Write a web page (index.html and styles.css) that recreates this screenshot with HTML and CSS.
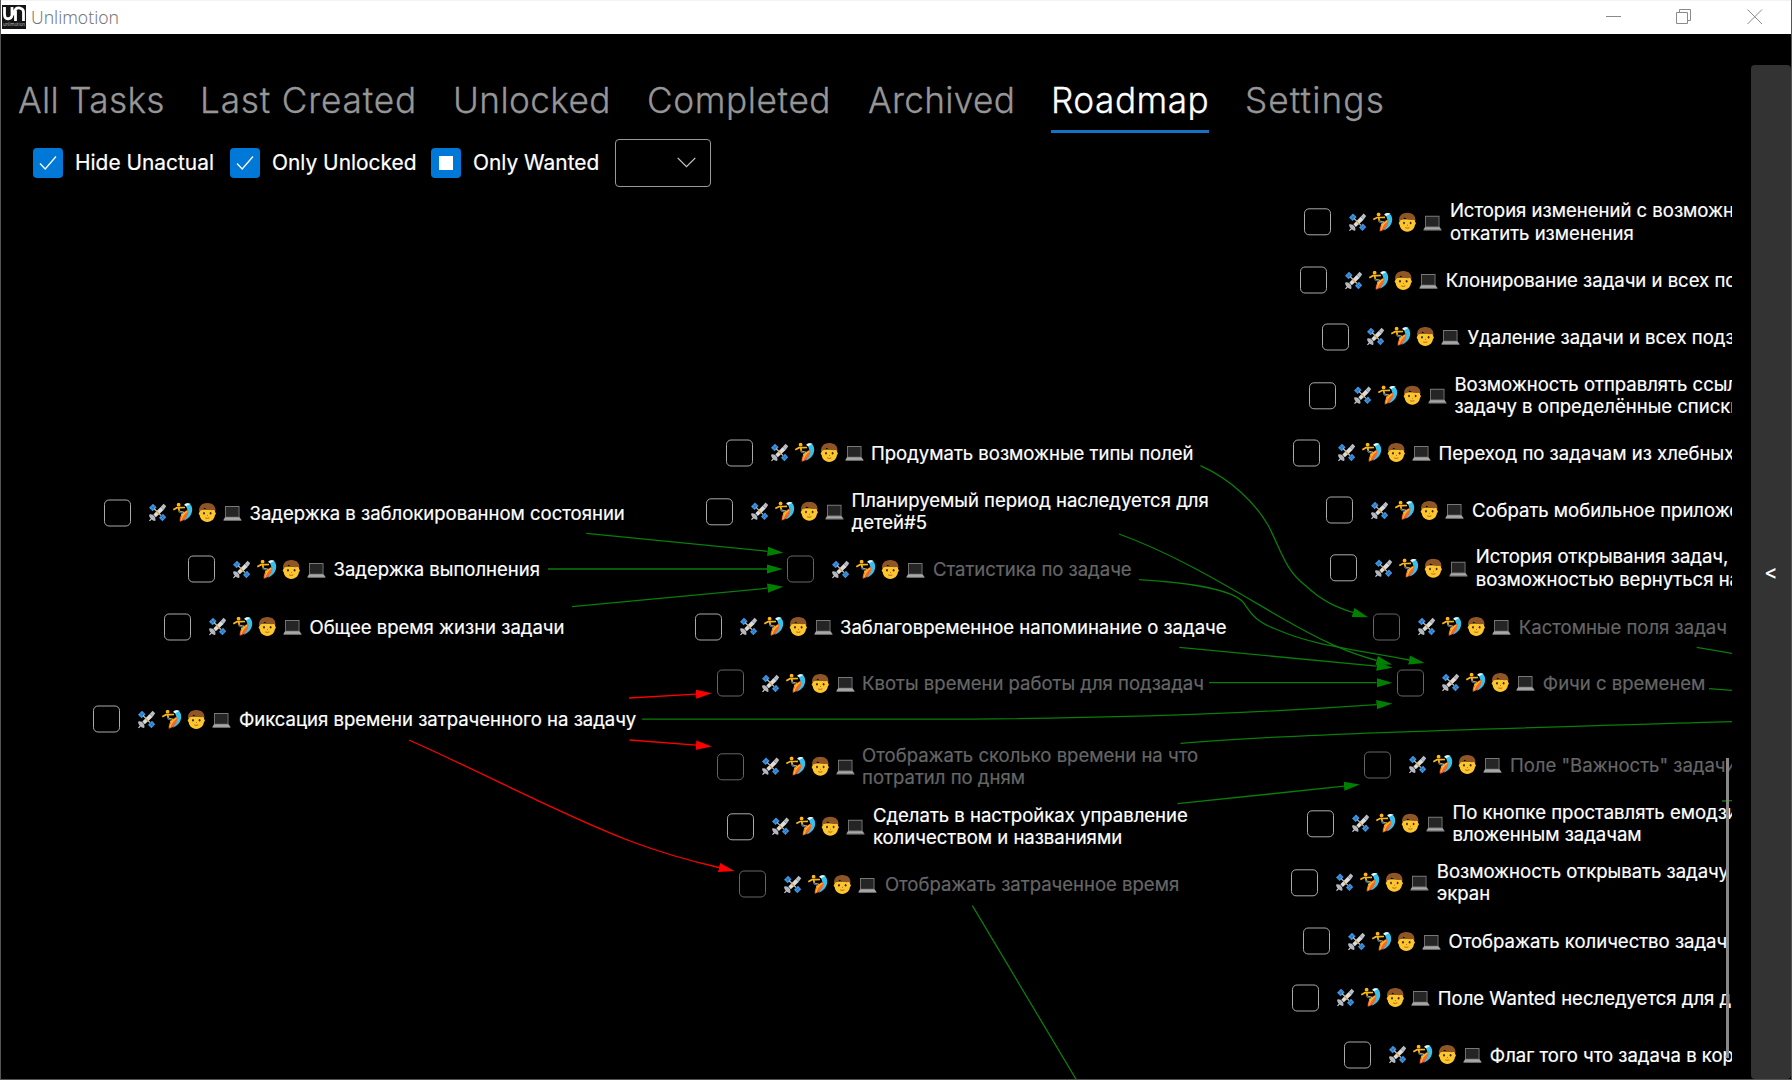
FILE: index.html
```
<!DOCTYPE html>
<html lang="ru">
<head>
<meta charset="utf-8">
<title>Unlimotion</title>
<link rel="stylesheet" href="styles.css">
</head>
<body>
<svg class="defs" width="0" height="0" aria-hidden="true">
  <defs>
    <symbol id="tags" viewBox="0 0 94 20">
      <!-- satellite -->
      <g>
        <path d="M1 5.200 5 1.200 8.600 4.800 4.600 8.800zM11 15.200l4-4 3.200 3.600-3.800 4z" fill="#3f96e4"/>
        <path d="M3 7.200 7 3.200M12.700 17l4-4M3.200 3.400l3.600 3.600M13 13.200l3.400 3.500" stroke="#15508c" stroke-width=".5"/>
        <path d="M6 6l7 7" stroke="#bbb" stroke-width="1.200"/>
        <path d="M5.400 11.900 12.600 4.400l3 3-7.800 7.400z" fill="#dcdde0"/>
        <path d="M12.600 4.400 15.600 1.200l2.600 2.600L15.600 7.400z" fill="#b9bcc2"/>
        <path d="M8.300 8.800l3 3" stroke="#d9a33c" stroke-width="1.300"/>
        <path d="M1.200 12.200c3-1.600 7.400 2.400 6 6.200C5.500 19 .4 15 1.200 12.200z" fill="#b4b7be"/>
        <path d="M3.600 16.200 1.500 18.300" stroke="#d8d8d8" stroke-width="1.200"/>
      </g>
      <!-- surfer -->
      <g transform="translate(25)">
        <path d="M12 1.500c4-2 7.200 1 7.200 5.800 0 5-3.700 9-8.700 11 3.500-5 5-8.500 3.200-13z" fill="#35c3ee"/>
        <path d="M11.200 2.200c1.600-1.800 4.600-2 6.600-.7-1.500 0-1.800 1.300-3.200 1.200-.8 1.300-2 1.400-3.400-.5z" fill="#e6f7fc"/>
        <path d="M6.800 19.300C6 14 9.500 9 15.300 7.200 16 13 12.500 17.500 6.800 19.300z" fill="#f4672a"/>
        <path d="M8.200 17.500c.6-3.500 2.800-6.700 6-8.800" stroke="#ffc12b" stroke-width="1.100" fill="none"/>
        <circle cx="5.600" cy="2.200" r="1.900" fill="#fcb712"/>
        <path d="M.3 7.200 4 5.200h4l4-.2M5.500 5l1 4 3.600.8-1.500 3.400" stroke="#fcb712" stroke-width="1.700" fill="none"/>
        <path d="M6.200 8.300l.8 1.600 3 .3" stroke="#2f66a8" stroke-width="1.500" fill="none"/>
      </g>
      <!-- face -->
      <g transform="translate(50)">
        <ellipse cx="9.300" cy="10.900" rx="8.700" ry="3" fill="#f6b31d"/>
        <path d="M1.600 7h15.400v4.500c0 4.500-3.200 7.900-7.700 7.900s-7.700-3.400-7.700-7.900z" fill="#fdc62e"/>
        <path d="M1.200 9C.6 4 3.500.5 9.300.5S18 4 17.400 9L16 7.500C12.500 8 8.500 7.200 6.500 5.300 5.500 7 3.500 8 2.500 8z" fill="#8f5526"/>
        <ellipse cx="6" cy="10.700" rx=".9" ry="1.300" fill="#3c2a1e"/>
        <ellipse cx="12.600" cy="10.700" rx=".9" ry="1.300" fill="#3c2a1e"/>
        <path d="M7.200 15.400q2.100 1 4.200 0M9 13h.9" stroke="#a5601f" stroke-width=".9" fill="none"/>
      </g>
      <!-- laptop -->
      <g transform="translate(75)">
        <path d="M2 3.500h14.500v12H2z" fill="#787878"/>
        <path d="M2.900 4.400h12.700v9.900H2.900z" fill="#252525"/>
        <path d="M1.800 15h15l1.500 2.400H.5z" fill="#a9a9a9"/>
        <path d="M.5 17.200h18v1H.5z" fill="#8c8c8c"/>
      </g>
    </symbol>
    <marker id="tip-green" markerUnits="userSpaceOnUse" markerWidth="16" markerHeight="10" refX="0" refY="5" orient="auto"><path d="M0 .4 15.800 5 0 9.600z" fill="#008000"/></marker>
    <marker id="tip-red" markerUnits="userSpaceOnUse" markerWidth="16" markerHeight="10" refX="0" refY="5" orient="auto"><path d="M0 .4 15.800 5 0 9.600z" fill="#f00"/></marker>
  </defs>
</svg>
<div class="window">
  <header class="titlebar">
    <span class="logo">
      <svg viewBox="0 0 24 16" width="24" height="16"><path d="M2.500 1v7.500c0 5.500 6.500 5.500 7.500 1L13 4.500c1.500-4 8.500-3 8.500 1.500V15M13.500 15V5M10 9.500V1" fill="none" stroke="#fff" stroke-width="2.800"/></svg>
      <span class="logo-name">unlimotion</span>
    </span>
    <span class="app-name">Unlimotion</span>
    <div class="controls">
      <svg width="16" height="16"><path d="M0 7.500h15"/></svg>
      <svg width="16" height="16"><path d="M.5 3.500h11v11H.5zM3.500 3.500v-3h11v11h-3"/></svg>
      <svg width="16" height="16"><path d="M.5.5l14.500 14.500M15 .5.5 15"/></svg>
    </div>
  </header>
  <div class="main">
    <section class="content">
      <nav class="tabs">
        <span class="tab w-all">All Tasks</span>
        <span class="tab w-last">Last Created</span>
        <span class="tab w-unlocked">Unlocked</span>
        <span class="tab w-completed">Completed</span>
        <span class="tab w-archived">Archived</span>
        <span class="tab w-roadmap active">Roadmap</span>
        <span class="tab w-settings">Settings</span>
      </nav>
      <div class="filters">
        <label class="filter f-hide"><span class="check"><svg width="18" height="16" viewBox="0 0 18 16"><path d="M1 8.500 6.200 14 17 1.500" fill="none" stroke="#fff" stroke-width="1.300"/></svg></span>Hide Unactual</label>
        <label class="filter f-unlocked"><span class="check"><svg width="18" height="16" viewBox="0 0 18 16"><path d="M1 8.500 6.200 14 17 1.500" fill="none" stroke="#fff" stroke-width="1.300"/></svg></span>Only Unlocked</label>
        <label class="filter f-wanted"><span class="check"><span class="mixed"></span></span>Only Wanted</label>
        <span class="combo"><svg width="19" height="11" viewBox="0 0 19 11"><path d="M.7.9 9.500 9.700 18.300.9" fill="none" stroke="#c4c4c4" stroke-width="1.300"/></svg></span>
      </div>
      <div class="graph">
        <svg class="edges" width="1732" height="889" viewBox="0 190 1732 889">
          <g class="green">
            <path class="head" d="M586.300 533.300 767.600 551.300"/>
            <path class="head" d="M548 569H767"/>
            <path class="head" d="M572 606.700 767.500 588.200"/>
            <path class="head" d="M1200.400 465.700C1232 480 1255 503 1268 525C1282 552 1285 570 1306 586C1322 601 1336 607 1353 612.500"/>
            <path class="head" d="M1119 534C1180 556 1240 594 1280 617C1320 640 1345 652 1376.700 660.500"/>
            <path class="head" d="M1139 579.700C1180 582 1228 588 1242 601C1249 608 1250 620 1278 630C1310 644 1340 647 1409 660"/>
            <path class="head" d="M1179.400 647.300 1376.700 666.200"/>
            <path class="head" d="M1209 682.700H1376.500"/>
            <path class="head" d="M642 719.200H925C1060 719 1230 715 1376.500 704.700"/>
            <path d="M1180.500 743.300C1300 733 1560 727 1732 721.700"/>
            <path class="head" d="M1177.500 803.700 1344 786.200"/>
            <path d="M972.400 905.700 1076.500 1080M1696.700 647.300 1732 653.300M1709 688.700 1732 690.300M1722 801 1732 800.600"/>
          </g>
          <g class="red">
            <path class="head" d="M629 698 696 694.200"/>
            <path class="head" d="M629.500 740 696 745.200"/>
            <path class="head" d="M409 740C496 779 560 814 630 841C662 853 690 861 719 867.500"/>
          </g>
        </svg>

        <div class="node" style="left:104px;top:322.500px"><i class="box"></i><svg class="tags"><use href="#tags"/></svg><span>Задержка в заблокированном состоянии</span></div>
        <div class="node" style="left:188px;top:379px"><i class="box"></i><svg class="tags"><use href="#tags"/></svg><span>Задержка выполнения</span></div>
        <div class="node" style="left:164px;top:436.500px"><i class="box"></i><svg class="tags"><use href="#tags"/></svg><span>Общее время жизни задачи</span></div>
        <div class="node" style="left:93.400px;top:529px"><i class="box"></i><svg class="tags"><use href="#tags"/></svg><span>Фиксация времени затраченного на задачу</span></div>

        <div class="node" style="left:725.500px;top:262.500px"><i class="box"></i><svg class="tags"><use href="#tags"/></svg><span>Продумать возможные типы полей</span></div>
        <div class="node" style="left:706px;top:321.500px"><i class="box"></i><svg class="tags"><use href="#tags"/></svg><span>Планируемый период наследуется для<br>детей#5</span></div>
        <div class="node dim" style="left:787.400px;top:379px"><i class="box"></i><svg class="tags"><use href="#tags"/></svg><span>Статистика по задаче</span></div>
        <div class="node" style="left:694.500px;top:436.500px"><i class="box"></i><svg class="tags"><use href="#tags"/></svg><span>Заблаговременное напоминание о задаче</span></div>
        <div class="node dim" style="left:716.600px;top:493px"><i class="box"></i><svg class="tags"><use href="#tags"/></svg><span>Квоты времени работы для подзадач</span></div>
        <div class="node dim" style="left:716.600px;top:576.500px"><i class="box"></i><svg class="tags"><use href="#tags"/></svg><span>Отображать сколько времени на что<br>потратил по дням</span></div>
        <div class="node" style="left:727.400px;top:636.500px"><i class="box"></i><svg class="tags"><use href="#tags"/></svg><span>Сделать в настройках управление<br>количеством и названиями</span></div>
        <div class="node dim" style="left:739.400px;top:694px"><i class="box"></i><svg class="tags"><use href="#tags"/></svg><span>Отображать затраченное время</span></div>

        <div class="node" style="left:1304.400px;top:32px"><i class="box"></i><svg class="tags"><use href="#tags"/></svg><span>История изменений с возможн<br>откатить изменения</span></div>
        <div class="node" style="left:1300.300px;top:90px"><i class="box"></i><svg class="tags"><use href="#tags"/></svg><span>Клонирование задачи и всех по</span></div>
        <div class="node" style="left:1322px;top:146.500px"><i class="box"></i><svg class="tags"><use href="#tags"/></svg><span>Удаление задачи и всех подз</span></div>
        <div class="node" style="left:1309px;top:205.500px"><i class="box"></i><svg class="tags"><use href="#tags"/></svg><span>Возможность отправлять ссыл<br>задачу в определённые списки</span></div>
        <div class="node" style="left:1293px;top:262.500px"><i class="box"></i><svg class="tags"><use href="#tags"/></svg><span>Переход по задачам из хлебных</span></div>
        <div class="node" style="left:1326.400px;top:320px"><i class="box"></i><svg class="tags"><use href="#tags"/></svg><span>Собрать мобильное приложе</span></div>
        <div class="node" style="left:1330.300px;top:378px"><i class="box"></i><svg class="tags"><use href="#tags"/></svg><span>История открывания задач,<br>возможностью вернуться на</span></div>
        <div class="node dim" style="left:1373.300px;top:436.500px"><i class="box"></i><svg class="tags"><use href="#tags"/></svg><span>Кастомные поля задач</span></div>
        <div class="node dim" style="left:1397.300px;top:492.700px"><i class="box"></i><svg class="tags"><use href="#tags"/></svg><span>Фичи с временем</span></div>
        <div class="node dim" style="left:1364.400px;top:574.700px"><i class="box"></i><svg class="tags"><use href="#tags"/></svg><span>Поле "Важность" задачи</span></div>
        <div class="node" style="left:1307px;top:633.700px"><i class="box"></i><svg class="tags"><use href="#tags"/></svg><span>По кнопке проставлять емодзи<br>вложенным задачам</span></div>
        <div class="node" style="left:1291.300px;top:692.700px"><i class="box"></i><svg class="tags"><use href="#tags"/></svg><span>Возможность открывать задачу<br>экран</span></div>
        <div class="node" style="left:1303px;top:751px"><i class="box"></i><svg class="tags"><use href="#tags"/></svg><span>Отображать количество задач</span></div>
        <div class="node" style="left:1292.300px;top:807.500px"><i class="box"></i><svg class="tags"><use href="#tags"/></svg><span>Поле Wanted неследуется для д</span></div>
        <div class="node" style="left:1344.300px;top:864.700px"><i class="box"></i><svg class="tags"><use href="#tags"/></svg><span>Флаг того что задача в кор</span></div>
        <div class="scrollbar"></div>
      </div>
    </section>
    <aside class="drawer">&lt;</aside>
  </div>
</div>
</body>
</html>
```
FILE: styles.css
```
* { box-sizing: border-box; }
body { margin: 0; background: #000; font-family: Inter, "Noto Sans", sans-serif; color: #fff; }
.defs { position: absolute; }
.window { display: flex; flex-direction: column; width: 1792px; height: 1080px; overflow: hidden; border: 1px solid #555; border-top: 0; }
.titlebar { flex: none; display: flex; align-items: center; height: 34px; margin: 0 -1px; padding: 0 0 1px 2px; background: #fff; border-top: 1px solid #f3f3f3; }
.logo { display: flex; flex-direction: column; align-items: center; width: 24px; height: 24px; background: #141414; overflow: hidden; }
.logo svg { flex: none; margin-top: 1px; }
.logo-name { font-size: 4.500px; line-height: 6px; color: #bbb; }
.app-name { margin: 0 0 0 5px; font: 300 17.500px "Noto Sans", sans-serif; line-height: 20px; color: #777; }
.controls { display: flex; gap: 54px; margin-left: auto; padding-right: 29px; }
.controls svg { fill: none; stroke: #8a8a8a; stroke-width: 1; }
.controls svg:nth-child(2) { margin-right: 1px; }

.main { flex: 1; display: flex; min-height: 0; }
.content { flex: none; display: flex; flex-direction: column; width: 1731px; }
.tabs { display: flex; gap: 36px; height: 99px; padding: 42px 0 0 17px; }
.tab { height: 57px; padding-top: 3px; font-size: 35.200px; font-weight: 300; line-height: 42px; letter-spacing: .5px; white-space: nowrap; color: #969696; -webkit-text-stroke: .3px; }
.active { color: #fff; border-bottom: 3px solid #1472c4; }
.w-all { width: 146px; letter-spacing: .3px; }
.w-last { width: 217px; letter-spacing: .8px; }
.w-unlocked { width: 158px; letter-spacing: .4px; }
.w-completed { width: 185px; letter-spacing: .6px; }
.w-archived { width: 147px; letter-spacing: .3px; }
.w-roadmap { width: 158px; }
.w-settings { width: 142px; letter-spacing: 1.100px; }

.filters { display: flex; align-items: center; height: 57px; padding: 2px 0 0 32px; font-size: 20.900px; -webkit-text-stroke: .2px; }
.filter { display: flex; align-items: center; gap: 12px; white-space: nowrap; }
.f-hide { width: 197px; }
.f-unlocked { width: 201px; }
.f-wanted { width: 184px; }
.check { flex: none; display: flex; align-items: center; justify-content: center; width: 30px; height: 30px; background: #0078d7; border-radius: 4px; }
.mixed { width: 14px; height: 14px; background: #fff; }
.combo { display: flex; align-items: center; justify-content: flex-end; width: 96px; height: 48px; padding-right: 14px; border: 1px solid #999; border-radius: 4px; }

.graph { flex: 1; position: relative; overflow: hidden; }
.edges { position: absolute; left: -1px; top: 0; fill: none; stroke-width: 1.300; }
.green { stroke: #0a7d0a; }
.green .head { marker-end: url(#tip-green); }
.red { stroke: #f00; }
.red .head { marker-end: url(#tip-red); }
.node { position: absolute; display: flex; align-items: center; margin-left: -1px; transform: translateY(-50%); font-size: 18.530px; line-height: 22.500px; white-space: nowrap; -webkit-text-stroke: .2px; }
.node span { padding-bottom: .4px; }
.box { flex: none; width: 27px; height: 27px; border: 1px solid #aaa; border-radius: 5px; }
.tags { flex: none; width: 94px; height: 20px; margin: 0 7.500px 0 17px; }
.dim span { color: #666; }
.dim .box { border-color: #666; }
.scrollbar { position: absolute; left: 1725px; top: 568px; width: 3px; height: 300px; background: #888; }

.drawer { display: flex; align-items: center; justify-content: center; width: 40px; margin: 31px 0 0 19px; background: #333; border-radius: 4px; font-size: 20px; font-weight: 500; }
```
